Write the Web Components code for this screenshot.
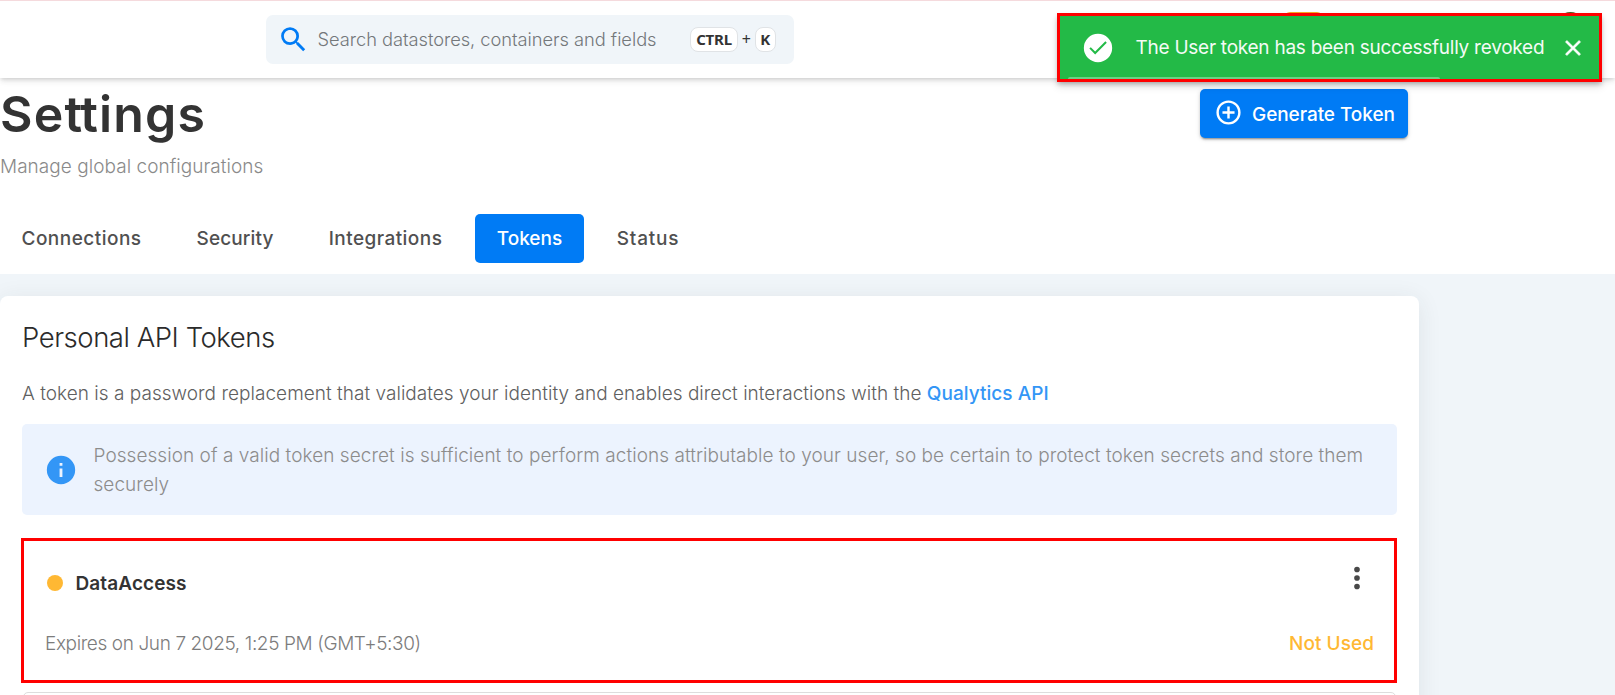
<!DOCTYPE html>
<html lang="en">
<head>
<meta charset="utf-8">
<title>Settings</title>
<style>
  html, body { margin: 0; height: 100%; overflow: hidden; }
  body { background: #f0f5f9; font-family: Inter, "Noto Sans", sans-serif; font-size: 19px; font-weight: 300; }
</style>
</head>
<body>
<settings-page></settings-page>
<script>
const define = (name, html) => {
  const template = document.createElement('template');
  template.innerHTML = html;
  customElements.define(name, class extends HTMLElement {
    constructor() {
      super();
      this.attachShadow({ mode: 'open' }).append(template.content.cloneNode(true));
    }
  });
};

define('key-cap', `
<style>
  :host { display: flex; align-items: center; justify-content: center; box-sizing: border-box; height: 25px;
    border: 1px solid #e0e3e6; border-radius: 8px; background: #fff; color: #333;
    font: 700 15px/22px "Noto Sans", sans-serif; padding-bottom: 1px; }
</style><slot></slot>`);

define('search-box', `
<style>
  :host { display: flex; align-items: center; box-sizing: border-box; width: 528px; height: 49px; border-radius: 7px;
    background: #f0f5f9; padding: 0 18px 0 11px; }
  svg { width: 33px; height: 33px; fill: #007bf5; flex: none; }
  .hint { flex: 1; margin: -2px 0 0 7.5px; font-size: 18.3px; letter-spacing: -.04px; color: #74787b; white-space: nowrap; }
  .ctrl { width: 48px; letter-spacing: -.2px; }
  .k { width: 21.5px; }
  .plus { width: 16.5px; text-align: center; font: 400 16px/24px "Noto Sans", sans-serif; color: #333; margin-top: -2px; }
</style>
<svg viewBox="0 0 24 24"><path d="M9.5,3A6.5,6.5 0 0,1 16,9.5C16,11.11 15.41,12.59 14.44,13.73L14.71,14H15.5L20.5,19L19,20.5L14,15.5V14.71L13.73,14.44C12.59,15.41 11.11,16 9.5,16A6.5,6.5 0 0,1 3,9.5A6.5,6.5 0 0,1 9.5,3M9.5,5C7,5 5,7 5,9.5C5,12 7,14 9.5,14C12,14 14,12 14,9.5C14,7 12,5 9.5,5Z"/></svg>
<span class="hint"><slot></slot></span>
<key-cap class="ctrl">CTRL</key-cap><span class="plus">+</span><key-cap class="k">K</key-cap>`);

define('app-header', `
<style>
  :host { display: block; position: relative; z-index: 1; box-sizing: border-box; height: 78px; background: #fff;
    border-top: 1px solid #f5dadd; padding: 14px 0 0 266px;
    box-shadow: 0 2px 4px -1px rgba(0,0,0,.14), 0 4px 6px rgba(0,0,0,.06), 0 1px 10px rgba(0,0,0,.04); }
  .badge, .avatar { position: absolute; }
  .badge { left: 1284px; top: 11px; width: 39px; height: 20px; border-radius: 6px; background: #f9a825; }
  .avatar { left: 1555px; top: 11px; width: 31px; height: 31px; border-radius: 50%; background: #4a5a20; }
</style>
<search-box>Search datastores, containers and fields</search-box>
<span class="badge"></span><span class="avatar"></span>`);

define('toast-message', `
<style>
  :host { position: absolute; z-index: 2; left: 1057px; top: 13.4px; width: 545px; height: 69px; box-sizing: border-box;
    border: 3px solid #f00; background: #23ba47; color: #fff; display: flex; align-items: center;
    box-shadow: 0 3px 5px -1px rgba(0,0,0,.25), 0 5px 8px rgba(0,0,0,.1); }
  .ok { width: 34px; height: 34px; margin-left: 21px; fill: #fff; flex: none; }
  .text { margin-left: 20.5px; width: 414px; font-weight: 400; letter-spacing: -.255px; white-space: nowrap; color: #f4fbf5; }
  .close { width: 26px; height: 26px; margin-left: 10.5px; fill: #fff; stroke: #fff; stroke-width: .5; flex: none; }
  .bar { position: absolute; left: 8px; bottom: 0; width: 372px; height: 2px; border-radius: 2px 2px 0 0; background: #6bd084; }
</style>
<svg class="ok" viewBox="0 0 24 24"><path fill-rule="evenodd" d="M12 2a10 10 0 1 0 0 20a10 10 0 1 0 0-20ZM10 16.5L5.9 12.4L6.9 11.4L10 14.5L17.2 7.3L18.2 8.3Z"/></svg>
<span class="text"><slot></slot></span>
<svg class="close" viewBox="0 0 24 24"><path d="M19,6.41L17.59,5L12,10.59L6.41,5L5,6.41L10.59,12L5,17.59L6.41,19L12,13.41L17.59,19L19,17.59L13.41,12L19,6.41Z"/></svg>
<span class="bar"></span>`);

define('primary-button', `
<style>
  :host { display: flex; align-items: center; box-sizing: border-box; width: 208px; height: 49px; border-radius: 5px;
    background: #007bf5; color: #fff; font-weight: 500; letter-spacing: -.06px; padding: 1px 0 0 13.5px; white-space: nowrap;
    box-shadow: 0 3px 1px -2px rgba(0,0,0,.2), 0 2px 2px rgba(0,0,0,.16), 0 1px 5px rgba(0,0,0,.14); }
  svg { width: 29px; height: 29px; fill: #fff; margin: -3px 9.5px 0 0; }
</style>
<svg viewBox="0 0 24 24"><path d="M12,20C7.59,20 4,16.41 4,12C4,7.59 7.59,4 12,4C16.41,4 20,7.59 20,12C20,16.41 16.41,20 12,20M12,2A10,10 0 0,0 2,12A10,10 0 0,0 12,22A10,10 0 0,0 22,12A10,10 0 0,0 12,2M13,7H11V11H7V13H11V17H13V13H17V11H13V7Z"/></svg>
<slot></slot>`);

define('tab-item', `
<style>
  :host { display: flex; align-items: center; justify-content: center; height: 49px; border-radius: 5px; color: #505050; font-weight: 500; white-space: nowrap; }
  :host([active]) { background: #007bf5; color: #fff; }
</style><slot></slot>`);

define('page-hero', `
<style>
  :host { display: block; box-sizing: border-box; height: 196px; background: #fff; padding-top: 6px; }
  .top { display: flex; justify-content: space-between; width: 1408px; height: 130px; }
  h1 { margin: 0; font-size: 50px; line-height: 60px; font-weight: 600; letter-spacing: 1.15px; color: #333; }
  h1 span { letter-spacing: -1.8px; }
  p { margin: 9px 0 0; line-height: 28px; letter-spacing: .04px; color: #8a8a8a; }
  primary-button { margin-top: 5px; }
  nav { display: flex; gap: 11px; }
  .a { width: 163px; letter-spacing: .474px; } .b { width: 122px; letter-spacing: .13px; } .c { width: 157px; letter-spacing: .45px; }
  .d { width: 109px; } .e { width: 106px; letter-spacing: .8px; }
</style>
<div class="top"><div><h1>Se<span>t</span>tings</h1><p>Manage global configurations</p></div>
<primary-button>Generate Token</primary-button></div>
<nav><tab-item class="a">Connections</tab-item><tab-item class="b">Security</tab-item><tab-item class="c">Integrations</tab-item><tab-item class="d" active>Tokens</tab-item><tab-item class="e">Status</tab-item></nav>`);

define('info-note', `
<style>
  :host { display: flex; align-items: center; box-sizing: border-box; height: 91px; border-radius: 5px; background: #ecf3fe;
    color: #8c8c8c; line-height: 29px; padding-left: 22px; }
  svg { width: 34px; height: 34px; fill: #3396f6; flex: none; margin-right: 15.5px; }
  div { width: 1290px; letter-spacing: .052px; }
</style>
<svg viewBox="0 0 24 24"><path d="M13,9H11V7H13M13,17H11V11H13M12,2A10,10 0 0,0 2,12A10,10 0 0,0 12,22A10,10 0 0,0 22,12A10,10 0 0,0 12,2Z"/></svg>
<div><slot></slot></div>`);

define('token-card', `
<style>
  :host { display: flex; flex-direction: column; box-sizing: border-box; height: 145px; margin-left: -1px; border: 3px solid #f00; background: #fff; padding: 16px 20px 0 21px; }
  .row { display: flex; align-items: center; }
  .head { height: 52px; }
  .foot { height: 28px; margin-top: 20px; justify-content: space-between; }
  .dot { width: 16px; height: 16px; border-radius: 50%; background: #ffb833; margin-left: 2px; }
  .name { margin-left: 12.5px; font-weight: 600; letter-spacing: .1px; color: #333; flex: 1; }
  .menu { width: 34px; height: 34px; fill: #484848; margin: -11px 0 0 0; }
  .exp { letter-spacing: -.388px; color: #7c7c7c; }
  .state { color: #ffb833; font-weight: 500; letter-spacing: .05px; }
</style>
<div class="row head"><span class="dot"></span><span class="name"><slot name="name"></slot></span>
<svg class="menu" viewBox="0 0 24 24"><path d="M12,16A2,2 0 0,1 14,18A2,2 0 0,1 12,20A2,2 0 0,1 10,18A2,2 0 0,1 12,16M12,10A2,2 0 0,1 14,12A2,2 0 0,1 12,14A2,2 0 0,1 10,12A2,2 0 0,1 12,10M12,4A2,2 0 0,1 14,6A2,2 0 0,1 12,8A2,2 0 0,1 10,6A2,2 0 0,1 12,4Z"/></svg></div>
<div class="row foot"><span class="exp"><slot name="expiry"></slot></span><span class="state"><slot name="state"></slot></span></div>`);

define('token-panel', `
<style>
  :host { display: block; box-sizing: border-box; width: 1419px; height: 460px; margin-top: 22px; border-radius: 8px 8px 0 0;
    background: #fff; padding: 21px 22px 0; box-shadow: 0 4px 24px rgba(40,50,60,.09); }
  h2 { margin: 0; font-size: 27.5px; line-height: 40px; font-weight: 300; letter-spacing: -.46px; color: #2b2b2b; }
  p { margin: 21.5px 0 16.5px; line-height: 29px; letter-spacing: .03px; color: #606060; white-space: nowrap; }
  a { color: #3396f6; font-weight: 500; letter-spacing: .04px; }
  token-card { margin-top: 23px; }
  .next { height: 60px; margin: 9px 1px 0; border: 1px solid #ddd; border-radius: 5px; }
</style>
<h2>Personal API Tokens</h2>
<p>A token is a password replacement that validates your identity and enables direct interactions with the <a>Qualytics API</a></p>
<info-note>Possession of a valid token secret is sufficient to perform actions attributable to your user, so be certain to protect token secrets and store them securely</info-note>
<token-card><span slot="name">DataAccess</span><span slot="expiry">Expires on Jun 7 2025, 1:25 PM (GMT+5:30)</span><span slot="state">Not Used</span></token-card>
<div class="next"></div>`);

define('settings-page', `
<style>:host { display: block; position: relative; height: 695px; overflow: hidden; }</style>
<app-header></app-header>
<toast-message>The User token has been successfully revoked</toast-message>
<page-hero></page-hero>
<token-panel></token-panel>`);
</script>
</body>
</html>
